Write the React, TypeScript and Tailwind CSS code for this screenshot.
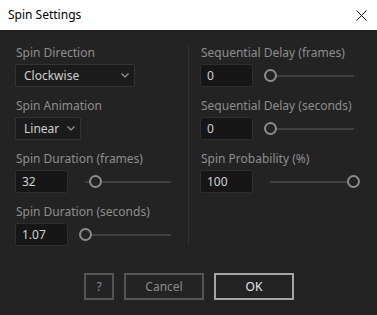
import React from "react";

const font = { fontFamily: '"Noto Sans", "Open Sans", sans-serif' };

const Chevron = () => (
  <svg width="8" height="5" viewBox="0 0 8 5" className="shrink-0">
    <path d="M0.5 0.5 L4 4 L7.5 0.5" fill="none" stroke="#9a9a9a" strokeWidth="1.2" />
  </svg>
);

const Label = ({ children }: { children: React.ReactNode }) => (
  <div className="text-[12px] leading-[16px] text-[#8e8e8e] mb-[3px] pl-px whitespace-nowrap">{children}</div>
);

const Select = ({ value, width }: { value: string; width: string }) => (
  <div
    className={`${width} h-[23px] flex items-center justify-between pl-[8px] pr-[5px] bg-[#1b1b1b] border border-[#333333] rounded-[2px] text-[12px] text-[#cfcfcf]`}
  >
    <span>{value}</span>
    <Chevron />
  </div>
);

const Slider = ({ knob, width, ml }: { knob: number; width: string; ml: string }) => (
  <div className={`relative ${width} ${ml} h-[13px] flex items-center`}>
    <div className="mx-[6px] h-[2px] flex-1 bg-[#404040]" />
    <div
      className="absolute top-0 w-[13px] h-[13px] rounded-full border-2 border-[#8c8c8c] bg-[#232323]"
      style={{ left: knob }}
    />
  </div>
);

const NumberField = ({
  label,
  value,
  knob,
  sliderW,
  sliderMl,
}: {
  label: string;
  value: string;
  knob: number;
  sliderW: string;
  sliderMl: string;
}) => (
  <div>
    <Label>{label}</Label>
    <div className="flex items-center">
      <div className="w-[53px] h-[23px] flex items-center pl-[6px] bg-[#161616] border border-[#2e2e2e] rounded-[2px] text-[12px] text-[#d2d2d2]">
        {value}
      </div>
      <Slider knob={knob} width={sliderW} ml={sliderMl} />
    </div>
  </div>
);

export default function App() {
  return (
    <div className="w-[377px] h-[315px] bg-[#232323] flex flex-col overflow-hidden" style={font}>
      {/* Title bar */}
      <div className="h-[30px] bg-white flex items-center justify-between pl-[8px] pr-[10px]">
        <span className="text-[12px] text-black">Spin Settings</span>
        <svg width="11" height="11" viewBox="0 0 11 11">
          <path d="M0.5 0.5 L10.5 10.5 M10.5 0.5 L0.5 10.5" stroke="#111" strokeWidth="1" />
        </svg>
      </div>

      {/* Body */}
      <div className="flex pl-[15px] pt-[15px]">
        {/* Left */}
        <div className="w-[162px] flex flex-col gap-[11px]">
          <div>
            <Label>Spin Direction</Label>
            <Select value="Clockwise" width="w-[120px]" />
          </div>
          <div>
            <Label>Spin Animation</Label>
            <Select value="Linear" width="w-[66px]" />
          </div>
          <NumberField label="Spin Duration (frames)" value="32" knob={10} sliderW="w-[98px]" sliderMl="ml-[11px]" />
          <NumberField label="Spin Duration (seconds)" value="1.07" knob={0} sliderW="w-[98px]" sliderMl="ml-[11px]" />
        </div>

        {/* Divider */}
        <div className="w-px h-[200px] mt-0 bg-[#333333] ml-[11px] mr-[11px]" />

        {/* Right */}
        <div className="w-[160px] flex flex-col gap-[11px]">
          <NumberField label="Sequential Delay (frames)" value="0" knob={0} sliderW="w-[96px]" sliderMl="ml-[11px]" />
          <NumberField label="Sequential Delay (seconds)" value="0" knob={0} sliderW="w-[96px]" sliderMl="ml-[11px]" />
          <NumberField label="Spin Probability (%)" value="100" knob={83} sliderW="w-[96px]" sliderMl="ml-[11px]" />
        </div>
      </div>

      {/* Buttons */}
      <div className="flex justify-center gap-[10px] mt-[27px] pl-px">
        <button className="w-[30px] h-[27px] border-2 border-[#555555] text-[12px] text-[#8a8a8a]">?</button>
        <button className="w-[80px] h-[27px] border-2 border-[#555555] text-[12px] text-[#8a8a8a]">Cancel</button>
        <button className="w-[80px] h-[27px] border-2 border-[#a6a6a6] text-[12px] text-[#e6e6e6]">OK</button>
      </div>
    </div>
  );
}
